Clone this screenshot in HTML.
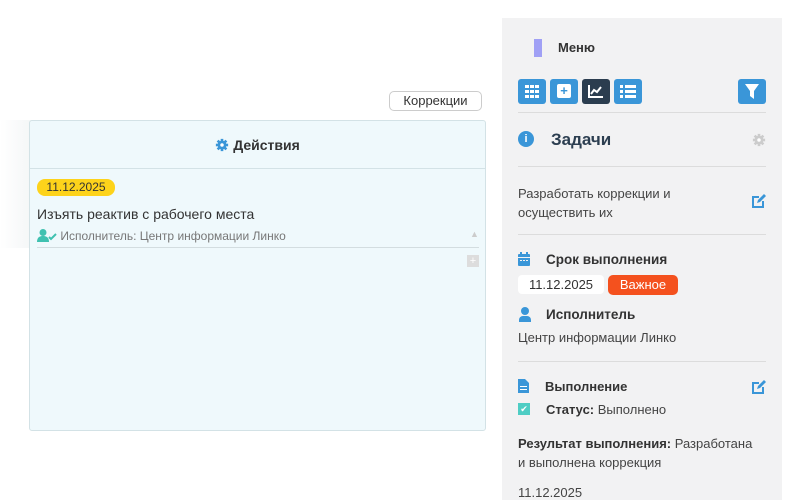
<!DOCTYPE html>
<html><head><meta charset="utf-8"><style>
*{box-sizing:border-box;margin:0;padding:0}
body{width:800px;height:500px;background:#fff;font-family:"Liberation Sans",sans-serif;color:#333;position:relative;overflow:hidden;font-size:13px}
.abs{position:absolute}
.btn{position:absolute;top:79px;width:28px;height:25px;border-radius:3px;background:#3a96d8}
.hr{position:absolute;left:518px;width:248px;height:1px;background:#dcdcdc}
.b{font-weight:bold;color:#333}
</style></head><body>
<svg width="0" height="0" style="position:absolute"><defs>
<g id="gear"><circle cx="8" cy="8" r="5" fill="currentColor"/><g stroke="currentColor" stroke-width="3"><line x1="8" y1="1" x2="8" y2="15"/><line x1="1" y1="8" x2="15" y2="8"/><line x1="3" y1="3" x2="13" y2="13"/><line x1="13" y1="3" x2="3" y2="13"/></g><circle cx="8" cy="8" r="2" fill="#fff"/></g>
<g id="edit"><path d="M2 4h7v2H4v8h8V9h2v7H2z" fill="currentColor"/><path d="M7 11l1-3 6-6 2 2-6 6z" fill="currentColor"/></g>
</defs></svg>
<div class="abs" style="left:0;top:120px;width:32px;height:128px;background:linear-gradient(90deg,#fff,#f4f6f7)"></div>
<div class="abs" style="left:389px;top:91px;width:93px;height:20px;border:1px solid #ccc;border-radius:5px;text-align:center;font-size:13px;line-height:18px;color:#333">Коррекции</div>
<div class="abs" style="left:29px;top:120px;width:457px;height:311px;background:#eff9fc;border:1px solid #d3e2e6;border-radius:3px">
 <div style="height:48px;border-bottom:1px solid #d3e2e6;text-align:center;line-height:48px;font-weight:bold;font-size:14px;color:#333"><svg width="14" height="14" viewBox="0 0 16 16" style="color:#3a96d8;vertical-align:-2px;margin-right:4px"><use href="#gear"/></svg>Действия</div>
 <div class="abs" style="left:7px;top:58px;width:78px;height:17px;background:#fdd31b;border-radius:8px;font-size:12px;line-height:17px;text-align:center;color:#333">11.12.2025</div>
 <div class="abs" style="left:7px;top:85px;font-size:14px;color:#333">Изъять реактив с рабочего места</div>
 <div class="abs" style="left:7px;top:108px;font-size:12px;color:#777"><svg width="20" height="13" viewBox="0 0 20 13" style="vertical-align:-2px"><circle cx="6" cy="3.5" r="3.5" fill="#3fc1b0"/><path d="M0 13c0-5 3-6 6-6s6 1 6 6z" fill="#3fc1b0"/><path d="M12 8l2 2 5-5" stroke="#3fc1b0" stroke-width="2" fill="none"/></svg> Исполнитель: Центр информации Линко</div>
 <div class="abs" style="left:440px;top:108px;font-size:9px;color:#ccc">▲</div>
 <div class="abs" style="left:7px;top:126px;width:442px;height:1px;background:#d3dde0"></div>
 <div class="abs" style="left:437px;top:134px;width:12px;height:12px;background:#ddd;color:#fff;font-size:11px;line-height:12px;text-align:center">+</div>
</div>
<div class="abs" style="left:502px;top:18px;width:280px;height:482px;background:#f2f2f3"></div>
<div class="abs" style="left:534px;top:39px;width:8px;height:18px;background:#a0a0f5"></div>
<div class="abs b" style="left:558px;top:40px;font-size:13px">Меню</div>
<div class="btn" style="left:518px"></div>
<div class="btn" style="left:550px"></div>
<div class="btn" style="left:582px;background:#2b3d4f"></div>
<div class="btn" style="left:614px"></div>
<div class="btn" style="left:738px"></div>
<svg class="abs" style="left:525px;top:85px" width="14" height="13"><g fill="#fff"><rect x="0" y="0" width="4" height="3"/><rect x="5" y="0" width="4" height="3"/><rect x="10" y="0" width="4" height="3"/><rect x="0" y="5" width="4" height="3"/><rect x="5" y="5" width="4" height="3"/><rect x="10" y="5" width="4" height="3"/><rect x="0" y="10" width="4" height="3"/><rect x="5" y="10" width="4" height="3"/><rect x="10" y="10" width="4" height="3"/></g></svg>
<div class="abs" style="left:557px;top:84px;width:14px;height:14px;background:#fff;border-radius:2px;color:#3a96d8;font-weight:bold;text-align:center;line-height:14px">+</div>
<svg class="abs" style="left:588px;top:84px" width="16" height="14"><path d="M1 1v12h14" stroke="#fff" stroke-width="2" fill="none"/><path d="M3 10l3-4 3 2 4-5" stroke="#fff" stroke-width="2" fill="none"/></svg>
<svg class="abs" style="left:620px;top:85px" width="16" height="13"><g fill="#fff"><rect x="0" y="0" width="3" height="3"/><rect x="5" y="0" width="11" height="3"/><rect x="0" y="5" width="3" height="3"/><rect x="5" y="5" width="11" height="3"/><rect x="0" y="10" width="3" height="3"/><rect x="5" y="10" width="11" height="3"/></g></svg>
<svg class="abs" style="left:745px;top:84px" width="14" height="15"><path d="M0 0h14l-5 7v8l-4-3V7z" fill="#fff"/></svg>
<div class="hr" style="top:112px"></div>
<div class="abs" style="left:518px;top:131px;width:16px;height:16px;border-radius:50%;background:#3a96d8;color:#fff;font-size:11px;font-weight:bold;text-align:center;line-height:16px">i</div>
<div class="abs b" style="left:551px;top:130px;font-size:17px;color:#2c3e50">Задачи</div>
<svg class="abs" style="left:752px;top:133px;color:#ccc" width="14" height="14" viewBox="0 0 16 16"><use href="#gear"/></svg>
<div class="hr" style="top:166px"></div>
<div class="abs" style="left:518px;top:184px;font-size:13px;line-height:19px;color:#444">Разработать коррекции и<br>осуществить их</div>
<svg class="abs" style="left:750px;top:192px;color:#3a96d8" width="16" height="16"><use href="#edit"/></svg>
<div class="hr" style="top:234px"></div>
<svg class="abs" style="left:518px;top:252px" width="12" height="14"><rect x="0" y="2" width="12" height="12" rx="1" fill="#3a96d8"/><rect x="2" y="0" width="2" height="3" fill="#3a96d8"/><rect x="8" y="0" width="2" height="3" fill="#3a96d8"/><g fill="#f2f2f3"><rect x="0" y="5" width="12" height="1"/><rect x="2" y="8" width="2" height="1"/><rect x="5" y="8" width="2" height="1"/><rect x="8" y="8" width="2" height="1"/></g></svg>
<div class="abs b" style="left:546px;top:252px;font-size:13.5px">Срок выполнения</div>
<div class="abs" style="left:518px;top:275px;width:86px;height:19px;background:#fff;border-radius:4px;text-align:center;line-height:19px;font-size:13px">11.12.2025</div>
<div class="abs" style="left:608px;top:275px;width:70px;height:20px;background:#f4511e;border-radius:5px;text-align:center;line-height:20px;font-size:13px;color:#fff">Важное</div>
<div class="abs" style="left:519px;top:307px;width:12px;height:14px"><div style="width:8px;height:8px;border-radius:50%;background:#3a96d8;margin-left:2px"></div><div style="width:12px;height:6px;border-radius:4px 4px 0 0;background:#3a96d8;margin-top:1px"></div></div>
<div class="abs b" style="left:546px;top:307px;font-size:13.5px">Исполнитель</div>
<div class="abs" style="left:518px;top:330px;font-size:13px;color:#444">Центр информации Линко</div>
<div class="hr" style="top:361px"></div>
<svg class="abs" style="left:518px;top:379px" width="11" height="14"><path d="M0 0h7l4 4v10H0z" fill="#3a96d8"/><g fill="#fff"><rect x="2" y="7" width="7" height="1"/><rect x="2" y="10" width="7" height="1"/></g></svg>
<div class="abs b" style="left:545px;top:379px;font-size:13px">Выполнение</div>
<svg class="abs" style="left:750px;top:378px;color:#3a96d8" width="16" height="16"><use href="#edit"/></svg>
<div class="abs" style="left:518px;top:403px;width:12px;height:12px;background:#4ecdc4;color:#fff;font-size:9px;text-align:center;line-height:12px">✔</div>
<div class="abs" style="left:546px;top:402px;font-size:13px;color:#444"><b style="color:#333">Статус:</b> Выполнено</div>
<div class="abs" style="left:518px;top:434px;font-size:13px;line-height:19px;color:#444"><b style="color:#333">Результат выполнения:</b> Разработана<br>и выполнена коррекция</div>
<div class="abs" style="left:518px;top:485px;font-size:13px;color:#444">11.12.2025</div>
</body></html>
